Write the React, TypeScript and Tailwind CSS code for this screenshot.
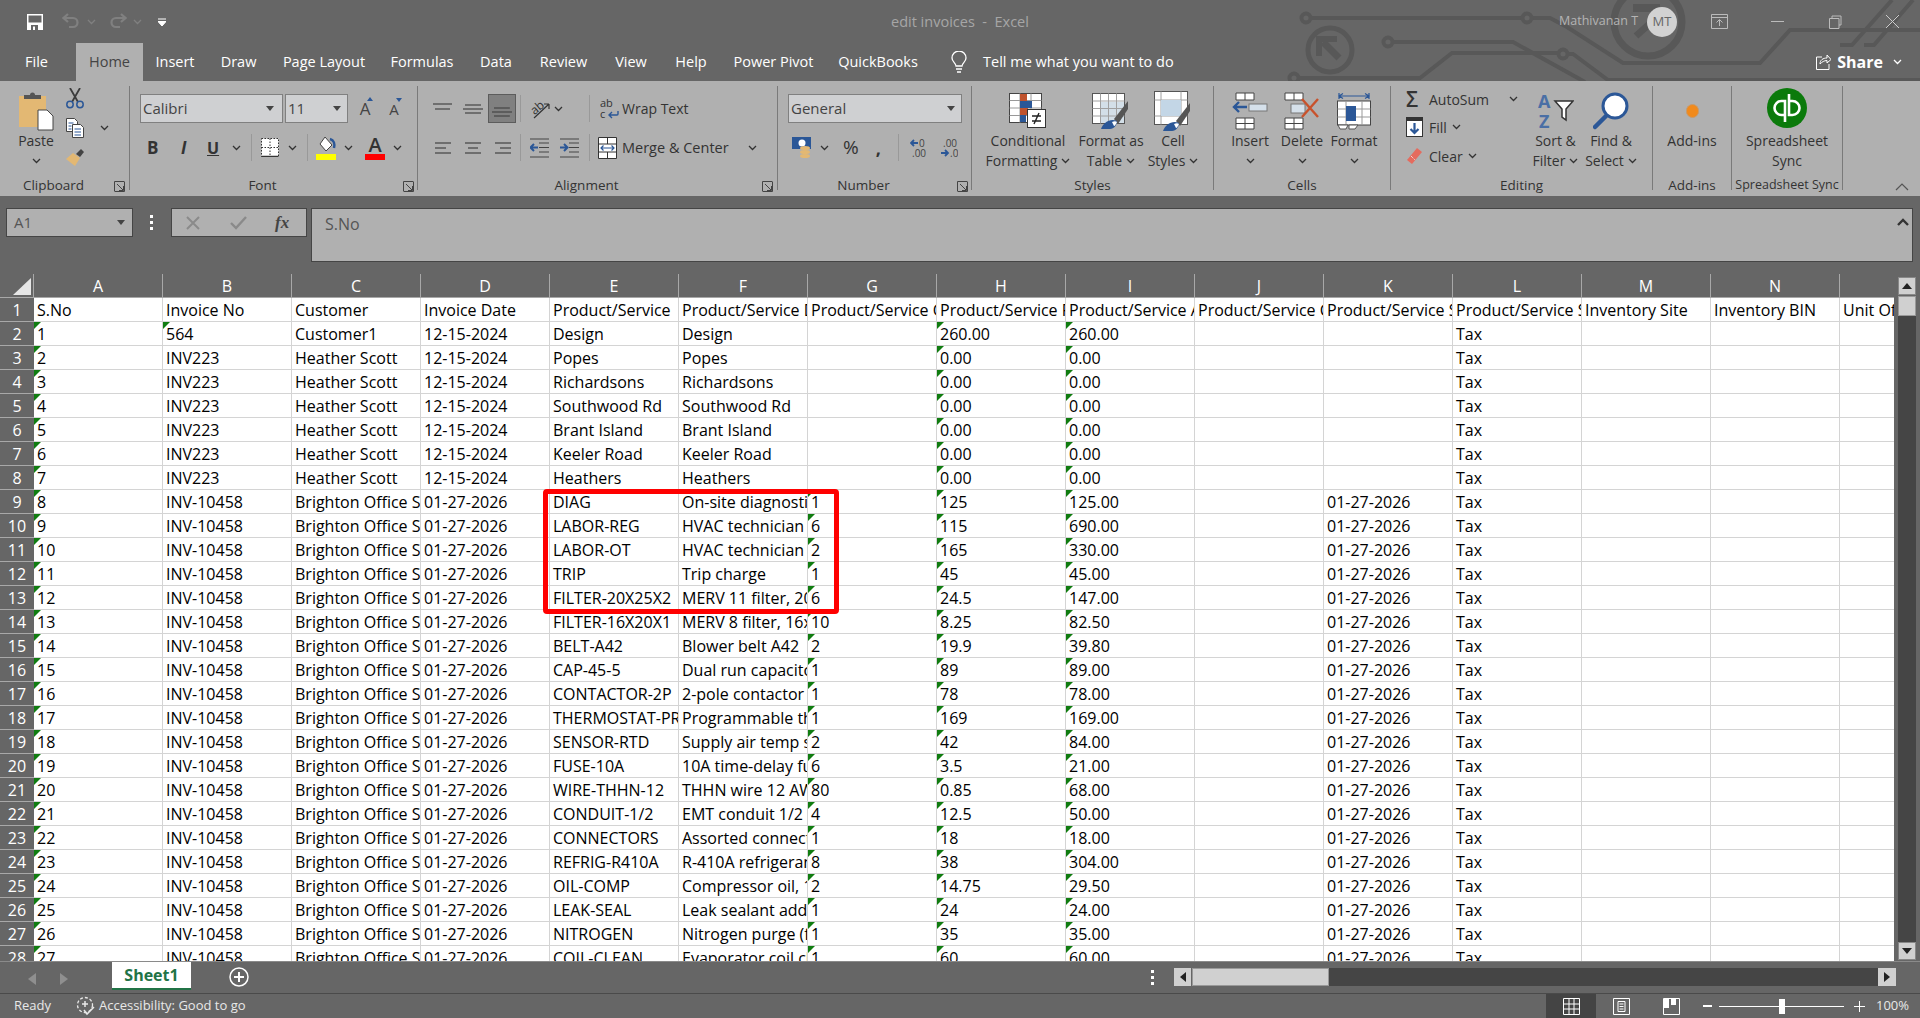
import React from "react";

const INK = "#333333";

function Chev({ className = "", color = INK }: { className?: string; color?: string }) {
  return (
    <svg width="9" height="6" viewBox="0 0 9 6" className={`shrink-0 ${className}`}>
      <path d="M1 1l3.5 3.5L8 1" fill="none" stroke={color} strokeWidth="1.3" />
    </svg>
  );
}

function Caret({ className = "" }: { className?: string }) {
  return (
    <svg width="8" height="5" viewBox="0 0 8 5" className={`shrink-0 ${className}`}>
      <path d="M0 0h8L4 5z" fill="#444" />
    </svg>
  );
}

function Launcher({ className = "" }: { className?: string }) {
  return (
    <svg width="11" height="11" viewBox="0 0 11 11" className={`absolute ${className}`}>
      <path d="M.5 10V.5H10M3 3l6 6M9.5 5v4.5H5M10.5 .5v10H.5" fill="none" stroke="#444" strokeWidth="1" />
    </svg>
  );
}

function Sep() {
  return <div className="w-px h-[104px] bg-[#7a7a7a] shrink-0" />;
}

function VLine({ className = "" }: { className?: string }) {
  return <div className={`w-px h-[27px] bg-[#999999] shrink-0 ${className}`} />;
}

function Group({
  w,
  label,
  pad,
  small,
  children,
}: {
  w: string;
  label: string;
  pad?: boolean;
  small?: boolean;
  children: React.ReactNode;
}) {
  return (
    <div className={`relative shrink-0 ${w}`}>
      <div className="h-[89px]">{children}</div>
      <div
        className={`h-[20px] leading-[20px] text-center text-[#333] whitespace-nowrap ${small ? "text-[12.5px]" : "text-[13.5px]"} ${
          pad ? "pr-[22px]" : ""
        }`}
      >
        {label}
      </div>
    </div>
  );
}

function Big({
  w,
  icon,
  lines,
  chevLast,
  plain,
}: {
  w: string;
  icon: React.ReactNode;
  lines: string[];
  chevLast?: boolean;
  plain?: boolean;
}) {
  return (
    <div className={`flex flex-col items-center shrink-0 pt-[4px] ${w}`}>
      <div className="h-[41px] flex items-center justify-center">{icon}</div>
      {lines.map((l, i) => (
        <div key={l} className="h-[20px] leading-[20px] text-[14px] text-[#333] whitespace-nowrap flex items-center">
          {l}
          {chevLast && i === lines.length - 1 ? <Chev className="ml-[4px]" /> : null}
        </div>
      ))}
      {!chevLast && !plain ? (
        <div className="h-[20px] flex items-center">
          <Chev />
        </div>
      ) : null}
    </div>
  );
}

function AlignLines({ ys, xs, className = "" }: { ys: number[]; xs: [number, number][]; className?: string }) {
  return (
    <svg width="20" height="20" viewBox="0 0 20 20" className={`shrink-0 ${className}`}>
      {ys.map((y, i) => (
        <path key={y} d={`M${xs[i][0]} ${y}H${xs[i][1]}`} stroke="#444" strokeWidth="1.2" />
      ))}
    </svg>
  );
}

function SaveIcon() {
  return (
    <svg width="16" height="16" viewBox="0 0 16 16" className="ml-[27px]">
      <path d="M0 0h16v16H0z" fill="#fff" />
      <path d="M1.5 1.5h13v7h-13z" fill="#666" />
      <path d="M4 11h7v5H4z" fill="#666" />
      <path d="M6 12.5h2V16H6z" fill="#fff" />
    </svg>
  );
}

function UndoIcon({ flip, className = "" }: { flip?: boolean; className?: string }) {
  return (
    <svg width="18" height="17" viewBox="0 0 18 17" className={className} style={flip ? { transform: "scaleX(-1)" } : undefined}>
      <path d="M2 5h9a4.5 4.5 0 010 9H7" fill="none" stroke="#808080" strokeWidth="2.2" />
      <path d="M6 1L1.5 5 6 9" fill="none" stroke="#808080" strokeWidth="2.2" />
    </svg>
  );
}

function PasteIcon() {
  return (
    <svg width="36" height="40" viewBox="0 0 36 40">
      <rect x="1" y="5" width="27" height="31" fill="#e3b873" />
      <path d="M6 8V4h6a2.5 2.5 0 015 0h6v4z" fill="#555" />
      <path d="M20 19h9l6 6v14H20z" fill="#fff" stroke="#444" strokeWidth="1" />
    </svg>
  );
}

function CutIcon() {
  return (
    <svg width="18" height="21" viewBox="0 0 18 21">
      <path d="M4 0l8 14M14 0L6 14" stroke="#3c3c3c" strokeWidth="1.8" fill="none" />
      <circle cx="4" cy="16.5" r="3.2" fill="none" stroke="#2b5797" strokeWidth="1.5" />
      <circle cx="14" cy="16.5" r="3.2" fill="none" stroke="#2b5797" strokeWidth="1.5" />
    </svg>
  );
}

function CopyIcon() {
  return (
    <svg width="18" height="20" viewBox="0 0 18 20">
      <path d="M.5.5h8l3 3v10H.5z" fill="#fff" stroke="#444" />
      <path d="M6.5 6.5h8l3 3v10h-11z" fill="#fff" stroke="#444" />
      <path d="M2.5 5h5M2.5 8h3M2.5 11h3M8.5 11H15M8.5 14H15M8.5 17H15" stroke="#2b5797" strokeWidth="1.2" />
    </svg>
  );
}

function PainterIcon() {
  return (
    <svg width="18" height="18" viewBox="0 0 18 18">
      <path d="M7 4l7 5-5 8-9-7z" fill="#e3b873" />
      <path d="M10 5l4-4 1-1 3 3-4 5z" fill="#444" />
    </svg>
  );
}

function BorderIcon() {
  return (
    <svg width="18" height="19" viewBox="0 0 18 19" className="shrink-0">
      <path d="M.5.5h17v18H.5zM9 .5v18M.5 9.5h17" fill="#fff" stroke="#333" strokeDasharray="1.5 1.5" />
      <path d="M.5 18.5h17" stroke="#333" strokeWidth="1.5" />
    </svg>
  );
}

function FillIcon() {
  return (
    <svg width="21" height="24" viewBox="0 0 21 24" className="shrink-0">
      <path d="M9 1l7 8-6 6-6-7z" fill="#fff" stroke="#444" />
      <path d="M14 3c4 1 5 5 4 9" fill="none" stroke="#2b5797" strokeWidth="2.5" />
      <rect x="0" y="18" width="20" height="6" fill="#ffff00" />
    </svg>
  );
}

function FontColorIcon() {
  return (
    <div className="flex flex-col items-center w-[20px] shrink-0">
      <span className="text-[20px] leading-[18px] font-semibold text-[#333]">A</span>
      <div className="h-[6px] w-[20px] bg-[#ff0000]" />
    </div>
  );
}

function Orientation() {
  return (
    <svg width="20" height="20" viewBox="0 0 20 20" className="shrink-0">
      <text x="0" y="12" fontSize="12" fill="#333" transform="rotate(-40 8 8)" fontFamily="Open Sans">ab</text>
      <path d="M4 19L19 5M19 5v5M19 5h-5" stroke="#333" strokeWidth="1.2" fill="none" />
    </svg>
  );
}

function IndentIcon({ dir, className = "" }: { dir: "l" | "r"; className?: string }) {
  return (
    <svg width="19" height="20" viewBox="0 0 19 20" className={`shrink-0 ${className}`}>
      <path d="M0 1h19M9 5h10M9 9.5h10M9 14h10M0 19h19" stroke="#444" strokeWidth="1.2" />
      {dir === "l" ? (
        <path d="M8 9.5H1M4 6L.5 9.5 4 13" stroke="#2b5797" strokeWidth="2" fill="none" />
      ) : (
        <path d="M0 9.5h7M4 6l3.5 3.5L4 13" stroke="#2b5797" strokeWidth="2" fill="none" />
      )}
    </svg>
  );
}

function WrapIcon() {
  return (
    <svg width="19" height="21" viewBox="0 0 19 21" className="shrink-0">
      <text x="0" y="9" fontSize="11" fill="#333" fontFamily="Open Sans">ab</text>
      <text x="0" y="20" fontSize="11" fill="#333" fontFamily="Open Sans">c</text>
      <path d="M18 13v3a1 1 0 01-1 1H9M12 14l-3 3 3 3" fill="none" stroke="#2b5797" strokeWidth="1.4" />
    </svg>
  );
}

function MergeIcon() {
  return (
    <svg width="19" height="22" viewBox="0 0 19 22" className="shrink-0">
      <path d="M.5.5h18v21H.5zM.5 7h18M.5 15h18M9.5.5V7M9.5 15v6.5" fill="#fff" stroke="#333" />
      <path d="M3 11h13M5.5 8.5L3 11l2.5 2.5M13.5 8.5L16 11l-2.5 2.5" stroke="#2b5797" fill="none" strokeWidth="1.2" />
    </svg>
  );
}

function CurrencyIcon() {
  return (
    <svg width="20" height="24" viewBox="0 0 20 24" className="shrink-0">
      <rect x="0" y="1" width="19" height="12" fill="#2b5797" />
      <circle cx="10" cy="7" r="3.5" fill="#fff" />
      <ellipse cx="13" cy="12" rx="5" ry="2" fill="#e3b873" />
      <ellipse cx="13" cy="16" rx="5" ry="2" fill="#e3b873" />
      <ellipse cx="13" cy="20" rx="5" ry="2" fill="#e3b873" />
    </svg>
  );
}

function DecimalIcon({ inc, className = "" }: { inc?: boolean; className?: string }) {
  return (
    <svg width="18" height="20" viewBox="0 0 18 20" className={`shrink-0 ${className}`}>
      {inc ? (
        <>
          <path d="M8 5H1M4 2L1 5l3 3" stroke="#2b5797" strokeWidth="1.8" fill="none" />
          <text x="9" y="9" fontSize="10" fill="#444" fontFamily="Open Sans">0</text>
          <text x="2" y="19" fontSize="10" fill="#444" fontFamily="Open Sans">.00</text>
        </>
      ) : (
        <>
          <text x="3" y="9" fontSize="10" fill="#444" fontFamily="Open Sans">.00</text>
          <path d="M1 15h7M5 12l3 3-3 3" stroke="#2b5797" strokeWidth="1.8" fill="none" />
          <text x="10" y="19" fontSize="10" fill="#444" fontFamily="Open Sans">.0</text>
        </>
      )}
    </svg>
  );
}

function CondIcon() {
  return (
    <svg width="38" height="36" viewBox="0 0 38 36">
      <rect x=".5" y=".5" width="32" height="29" fill="#fff" stroke="#444" />
      <path d="M.5 7.5h32M.5 15h32M.5 22.5h32M11 .5v29M22 .5v29" stroke="#999" />
      <rect x="11" y="1" width="7" height="7" fill="#c0532e" />
      <rect x="11" y="8" width="12" height="7" fill="#2b5797" />
      <rect x="11" y="15" width="8" height="7" fill="#c0532e" />
      <rect x="11" y="22" width="6" height="7" fill="#2b5797" />
      <rect x="18.5" y="16.5" width="18" height="18" fill="#fff" stroke="#333" />
      <path d="M23 23h9M23 28h9M30 20l-5 11" stroke="#222" strokeWidth="1.4" />
    </svg>
  );
}

function BrushTail() {
  return (
    <>
      <path d="M22 26l14-18v8L26 31z" fill="#555" />
      <path d="M9 36c2-6 9-11 16-8 0 4-3 8-7 8z" fill="#2b5797" />
      <path d="M20 29c2-1 4-1 5 0-1 2-2 4-3 4z" fill="#fff" />
    </>
  );
}

function TableStyleIcon() {
  return (
    <svg width="38" height="36" viewBox="0 0 38 36">
      <rect x=".5" y=".5" width="32" height="30" fill="#fff" stroke="#555" />
      <rect x="9" y="9" width="23" height="21" fill="#d3dfe8" />
      <path d="M.5 8h32M.5 15.5h32M.5 23h32M8.5.5v30M16.5.5v30M24.5.5v30" stroke="#a0a0a0" />
      <BrushTail />
    </svg>
  );
}

function CellStyleIcon() {
  return (
    <svg width="38" height="40" viewBox="0 0 38 40">
      <rect x=".5" y=".5" width="33" height="33" fill="#fff" stroke="#555" />
      <path d="M.5 9h33M.5 25h33M7 .5v33M27 .5v33" stroke="#a0a0a0" />
      <rect x="7" y="9" width="20" height="16" fill="#c3d6e6" />
      <g transform="translate(0 4)">
        <BrushTail />
      </g>
    </svg>
  );
}

function InsertCellsIcon() {
  return (
    <svg width="36" height="38" viewBox="0 0 36 38">
      <path d="M4 1h18v7H4zM13 1v7M4 26h18v11H4zM4 31.5h18M13 26v11" fill="#fff" stroke="#444" />
      <path d="M15 15H2M7 10l-5 5 5 5" stroke="#2b5797" strokeWidth="2.4" fill="none" />
      <rect x="17" y="12" width="18" height="7" fill="#d5e0ea" stroke="#777" />
    </svg>
  );
}

function DeleteCellsIcon() {
  return (
    <svg width="36" height="38" viewBox="0 0 36 38">
      <path d="M1 1h18v7H1zM10 1v7M1 26h18v11H1zM1 31.5h18M10 26v11" fill="#fff" stroke="#444" />
      <rect x="7" y="12" width="14" height="9" fill="#d5e0ea" stroke="#777" />
      <path d="M18 7l16 18M34 7L18 25" stroke="#c8522c" strokeWidth="2.4" />
    </svg>
  );
}

function FormatCellsIcon() {
  return (
    <svg width="34" height="38" viewBox="0 0 34 38">
      <path d="M2 4h30M2 1v6M32 1v6M6 1.5L2 4l4 2.5M28 1.5L32 4l-4 2.5" stroke="#2b5797" strokeWidth="1.2" fill="none" />
      <rect x=".5" y="9" width="33" height="24" fill="#fff" stroke="#444" />
      <path d="M9 9v24M25 9v24M.5 17h33M.5 25h33" stroke="#999" />
      <rect x="9" y="14" width="10" height="15" fill="#2b5797" />
      <path d="M1 33h10l-2 4H3zM12 33h9l-3 4h-6z" fill="#fff" stroke="#555" />
    </svg>
  );
}

function FillDownIcon() {
  return (
    <svg width="17" height="20" viewBox="0 0 17 20" className="shrink-0">
      <rect x=".5" y=".5" width="16" height="19" fill="#fff" stroke="#333" />
      <rect x="0" y="0" width="17" height="4" fill="#333" />
      <path d="M8.5 6v10M4.5 12l4 4 4-4" stroke="#2b5797" strokeWidth="2.2" fill="none" />
    </svg>
  );
}

function EraserIcon() {
  return (
    <svg width="17" height="18" viewBox="0 0 17 18" className="shrink-0">
      <path d="M11 1l5 4L6 17 1 13z" fill="#e56b5e" />
      <path d="M5 9l4 4" stroke="#fff" strokeDasharray="1 1" />
    </svg>
  );
}

function SortIcon() {
  return (
    <svg width="36" height="38" viewBox="0 0 36 38">
      <text x="0" y="16" fontSize="18" fontWeight="700" fill="#4a6fa5" fontFamily="Open Sans">A</text>
      <text x="1" y="36" fontSize="18" fontWeight="700" fill="#4a6fa5" fontFamily="Open Sans">Z</text>
      <path d="M17 9h18l-7 8v11l-4-3v-8z" fill="#fff" stroke="#333" strokeWidth="1.5" />
    </svg>
  );
}

function FindIcon() {
  return (
    <svg width="36" height="38" viewBox="0 0 36 38">
      <circle cx="22" cy="14" r="12" fill="#fff" stroke="#2b5797" strokeWidth="3" />
      <path d="M13 24L2 35" stroke="#2b5797" strokeWidth="4.5" strokeLinecap="round" />
    </svg>
  );
}

function QbLogo() {
  return (
    <svg width="40" height="40" viewBox="0 0 40 40" className="-mt-[5px]">
      <circle cx="20" cy="20" r="20" fill="#0b7a0b" />
      <path d="M18 27h-3.5a7 7 0 010-14H18v21M22 6v21h3.5a7 7 0 000-14H22" fill="none" stroke="#fff" strokeWidth="2.6" />
    </svg>
  );
}

function Circuit() {
  return (
    <svg width="640" height="81" viewBox="0 0 640 81" className="absolute right-0 top-0">
      <g fill="none" stroke="#585858" strokeWidth="4">
        <circle cx="26" cy="18" r="4.5" />
        <path d="M30 18h213M252 18h18l17 9 56 36h137l30-33h130" />
        <circle cx="247" cy="18" r="4.5" />
        <circle cx="50" cy="50" r="22" strokeWidth="5" />
        <path d="M59 58L43 42" strokeWidth="7" />
        <path d="M39 56V39h18" strokeWidth="6" />
        <circle cx="108" cy="42" r="4.5" />
        <path d="M113 42h120l72 40" />
        <circle cx="283" cy="54" r="4.5" />
        <circle cx="14" cy="78" r="4.5" />
        <path d="M19 78h121l32-25h106M288 54h5l35 26h312" />
        <circle cx="368" cy="22" r="34" strokeWidth="7" />
        <path d="M353 8h27" strokeWidth="8" />
        <path d="M356 36l20-18" strokeWidth="7" />
        <path d="M560 45h12L612 0M584 45h10L633 0" />
      </g>
    </svg>
  );
}

const TABS: [string, string][] = [
  ["File", "w-[76px] pr-[3px]"],
  ["Home", "w-[67px]"],
  ["Insert", "w-[64px]"],
  ["Draw", "w-[63px]"],
  ["Page Layout", "w-[108px]"],
  ["Formulas", "w-[88px]"],
  ["Data", "w-[60px]"],
  ["Review", "w-[75px]"],
  ["View", "w-[60px]"],
  ["Help", "w-[60px]"],
  ["Power Pivot", "w-[105px]"],
  ["QuickBooks", "w-[104px]"],
];

function TitleArea() {
  return (
    <div className="relative h-[81px] bg-[#666666] overflow-hidden">
      <Circuit />
      <div className="relative flex items-center h-[43px]">
        <SaveIcon />
        <UndoIcon className="ml-[19px]" />
        <Chev color="#808080" className="ml-[7px]" />
        <UndoIcon flip className="ml-[13px]" />
        <Chev color="#808080" className="ml-[6px]" />
        <svg width="8" height="8" viewBox="0 0 8 8" className="ml-[16px]">
          <path d="M0 1h8M0 3.5h8L4 8z" stroke="#fff" fill="#fff" />
        </svg>
        <div className="ml-[725px] w-[150px] text-[14.5px] text-[#a6a6a6] whitespace-pre">edit invoices  -  Excel</div>
        <div className="ml-[518px] text-[12.5px] text-[#b4b4b4] whitespace-nowrap w-[88px]">Mathivanan T</div>
        <div className="w-[30px] h-[30px] rounded-full bg-[#d2d2d2] text-[#666] text-[13px] flex items-center justify-center">MT</div>
        <svg width="17" height="15" viewBox="0 0 17 15" className="ml-[34px]">
          <path d="M.5.5h16v14H.5zM.5 3.5h16M8.5 12V6M5.5 8.5l3-3 3 3" fill="none" stroke="#bbb" />
        </svg>
        <div className="ml-[43px] w-[13px] h-px bg-[#bbb]" />
        <svg width="13" height="14" viewBox="0 0 13 14" className="ml-[45px]">
          <path d="M3 3V1h9v9h-2M.5 3.5H10v10H.5z" fill="none" stroke="#bbb" />
        </svg>
        <svg width="13" height="13" viewBox="0 0 13 13" className="ml-[44px]">
          <path d="M0 0l13 13M13 0L0 13" stroke="#ccc" />
        </svg>
      </div>
      <div className="relative flex h-[38px] items-stretch">
        {TABS.map(([t, w]) => (
          <div
            key={t}
            className={`${w} shrink-0 flex items-center justify-center text-[14.5px] whitespace-nowrap ${
              t === "Home" ? "bg-[#b0b0b0] text-[#444]" : "text-white"
            }`}
          >
            {t}
          </div>
        ))}
        <svg width="16" height="22" viewBox="0 0 16 22" className="self-center ml-[21px] shrink-0">
          <path d="M5 15c0-3-4-4-4-8a7 7 0 0114 0c0 4-4 5-4 8z" fill="none" stroke="#fff" strokeWidth="1.3" />
          <path d="M5 18h6M6 21h4" stroke="#fff" strokeWidth="1.3" />
        </svg>
        <div className="ml-[16px] self-center text-[14.5px] text-white whitespace-nowrap">Tell me what you want to do</div>
        <div className="ml-auto pr-[18px] self-center flex items-center">
          <svg width="15" height="16" viewBox="0 0 15 16">
            <path d="M6 3H.5v12.5H13V10M4 10c0-4 3-6 7-6V1l4 4.5L11 9V6.5C8 6.5 6 8 4 10z" fill="none" stroke="#fff" />
          </svg>
          <span className="ml-[6px] text-[16px] font-bold text-white">Share</span>
          <Chev color="#fff" className="ml-[10px]" />
        </div>
      </div>
    </div>
  );
}

function Ribbon() {
  return (
    <div className="flex items-start h-[115px] bg-[#b0b0b0] pt-[5px] text-[#333] overflow-hidden">
      <Group w="w-[129px]" label="Clipboard" pad>
        <div className="flex">
          <Big w="w-[72px]" icon={<PasteIcon />} lines={["Paste"]} />
          <div className="flex flex-col -ml-[6px] pt-[2px]">
            <CutIcon />
            <div className="flex items-center mt-[9px]">
              <CopyIcon />
              <Chev className="ml-[16px]" />
            </div>
            <div className="mt-[11px]">
              <PainterIcon />
            </div>
          </div>
        </div>
        <Launcher className="left-[114px] top-[95px]" />
      </Group>
      <Sep />

      <Group w="w-[287px]" label="Font" pad>
        <div className="flex items-center pl-[10px] pt-[8px]">
          <div className="w-[143px] h-[29px] bg-[#cfd0d2] border border-[#808080] flex items-center pl-[2px] text-[15px] text-[#444]">
            Calibri
            <Caret className="ml-auto mr-[8px]" />
          </div>
          <div className="ml-[2px] w-[63px] h-[29px] bg-[#cfd0d2] border border-[#808080] flex items-center pl-[2px] text-[15px] text-[#444]">
            11
            <Caret className="ml-auto mr-[6px]" />
          </div>
          <div className="ml-[9px] text-[17px] text-[#444] w-[16px] text-center leading-[20px] relative">
            A
            <div className="absolute -top-[2px] right-[0px] w-0 h-0 border-x-[3px] border-x-transparent border-b-[4px] border-b-[#2b5797]" />
          </div>
          <div className="ml-[13px] text-[15px] text-[#444] w-[16px] text-center leading-[20px] relative">
            A
            <div className="absolute -top-[1px] right-[0px] w-0 h-0 border-x-[3px] border-x-transparent border-t-[4px] border-t-[#2b5797]" />
          </div>
        </div>
        <div className="flex items-center pl-[17px] mt-[11px] h-[27px]">
          <span className="w-[13px] text-[17px] font-bold leading-none">B</span>
          <span className="ml-[21px] w-[13px] text-[17px] font-bold italic leading-none">I</span>
          <span className="ml-[13px] w-[14px] text-[16px] font-bold leading-none underline">U</span>
          <Chev className="ml-[11px]" />
          <VLine className="ml-[10px]" />
          <div className="ml-[9px]">
            <BorderIcon />
          </div>
          <Chev className="ml-[9px]" />
          <VLine className="ml-[10px]" />
          <div className="ml-[8px]">
            <FillIcon />
          </div>
          <Chev className="ml-[7px]" />
          <div className="ml-[12px]">
            <FontColorIcon />
          </div>
          <Chev className="ml-[8px]" />
        </div>
        <Launcher className="left-[273px] top-[95px]" />
      </Group>
      <Sep />

      <Group w="w-[359px]" label="Alignment" pad>
        <div className="flex items-center pl-[15px] pt-[8px] h-[37px]">
          <AlignLines ys={[5, 10]} xs={[[0, 19], [2, 17]]} />
          <AlignLines className="ml-[10px]" ys={[6, 10, 14]} xs={[[2, 18], [0, 20], [2, 18]]} />
          <div className="ml-[5px] w-[28px] h-[29px] bg-[#808080] border border-[#5c5c5c] flex items-center justify-center">
            <AlignLines ys={[9, 13, 17]} xs={[[2, 18], [0, 20], [2, 18]]} />
          </div>
          <VLine className="ml-[4px]" />
          <div className="ml-[9px]">
            <Orientation />
          </div>
          <Chev className="ml-[4px]" />
          <VLine className="ml-[26px]" />
          <div className="ml-[10px]">
            <WrapIcon />
          </div>
          <span className="ml-[3px] text-[14px] whitespace-nowrap">Wrap Text</span>
        </div>
        <div className="flex items-center pl-[17px] mt-[11px] h-[27px]">
          <AlignLines ys={[5, 10, 15]} xs={[[0, 16], [0, 11], [0, 16]]} />
          <AlignLines className="ml-[9px]" ys={[5, 10, 15]} xs={[[1, 17], [4, 14], [1, 17]]} />
          <AlignLines className="ml-[9px]" ys={[5, 10, 15]} xs={[[2, 18], [7, 18], [2, 18]]} />
          <VLine className="ml-[7px]" />
          <IndentIcon dir="l" className="ml-[9px]" />
          <IndentIcon dir="r" className="ml-[11px]" />
          <VLine className="ml-[10px]" />
          <div className="ml-[8px]">
            <MergeIcon />
          </div>
          <span className="ml-[5px] w-[106px] text-[14.5px] whitespace-nowrap">Merge &amp; Center</span>
          <Chev className="ml-[20px]" />
        </div>
        <Launcher className="left-[344px] top-[95px]" />
      </Group>
      <Sep />

      <Group w="w-[193px]" label="Number" pad>
        <div className="flex items-center pl-[10px] pt-[8px]">
          <div className="w-[174px] h-[29px] bg-[#cfd0d2] border border-[#808080] flex items-center pl-[2px] text-[15px] text-[#444]">
            General
            <Caret className="ml-auto mr-[6px]" />
          </div>
        </div>
        <div className="flex items-center pl-[14px] mt-[11px] h-[27px]">
          <CurrencyIcon />
          <Chev className="ml-[8px]" />
          <span className="ml-[14px] text-[19px] leading-none">%</span>
          <span className="ml-[17px] w-[8px] text-[18px] font-bold leading-none">,</span>
          <VLine className="ml-[14px]" />
          <DecimalIcon inc className="ml-[11px]" />
          <DecimalIcon className="ml-[12px]" />
        </div>
        <Launcher className="left-[179px] top-[95px]" />
      </Group>
      <Sep />

      <Group w="w-[241px]" label="Styles">
        <div className="flex pl-[4px]">
          <Big w="w-[104px]" icon={<CondIcon />} lines={["Conditional", "Formatting"]} chevLast />
          <Big w="w-[62px]" icon={<TableStyleIcon />} lines={["Format as", "Table"]} chevLast />
          <Big w="w-[62px]" icon={<CellStyleIcon />} lines={["Cell", "Styles"]} chevLast />
        </div>
      </Group>
      <Sep />

      <Group w="w-[176px]" label="Cells">
        <div className="flex pl-[10px]">
          <Big w="w-[52px]" icon={<InsertCellsIcon />} lines={["Insert"]} />
          <Big w="w-[52px]" icon={<DeleteCellsIcon />} lines={["Delete"]} />
          <Big w="w-[52px]" icon={<FormatCellsIcon />} lines={["Format"]} />
        </div>
      </Group>
      <Sep />

      <Group w="w-[261px]" label="Editing">
        <div className="flex">
          <div className="w-[136px] shrink-0 pl-[15px] text-[14px]">
            <div className="flex items-center h-[26px]">
              <span className="w-[23px] text-[21px] leading-none font-semibold">Σ</span>
              <span>AutoSum</span>
              <Chev className="ml-[20px]" />
            </div>
            <div className="flex items-center h-[26px] mt-[2px]">
              <div className="w-[23px]">
                <FillDownIcon />
              </div>
              <span>Fill</span>
              <Chev className="ml-[5px]" />
            </div>
            <div className="flex items-center h-[26px] mt-[3px]">
              <div className="w-[23px]">
                <EraserIcon />
              </div>
              <span>Clear</span>
              <Chev className="ml-[5px]" />
            </div>
          </div>
          <Big w="w-[57px]" icon={<SortIcon />} lines={["Sort &", "Filter"]} chevLast />
          <Big w="w-[54px]" icon={<FindIcon />} lines={["Find &", "Select"]} chevLast />
        </div>
      </Group>
      <Sep />

      <Group w="w-[78px]" label="Add-ins">
        <Big
          w="w-[78px]"
          icon={<div className="w-[13px] h-[14px] rounded-full bg-[#f18a1c] border border-[#c99a6a]" />}
          lines={["Add-ins"]}
          plain
        />
      </Group>
      <Sep />

      <Group w="w-[110px]" label="Spreadsheet Sync" small>
        <Big w="w-[110px]" icon={<QbLogo />} lines={["Spreadsheet", "Sync"]} plain />
      </Group>
      <Sep />

      <svg width="14" height="8" viewBox="0 0 14 8" className="ml-[52px] mt-[97px] shrink-0">
        <path d="M1 7l6-6 6 6" fill="none" stroke="#555" strokeWidth="1.2" />
      </svg>
    </div>
  );
}

function FormulaBar() {
  return (
    <div className="flex items-start h-[78px] bg-[#666666] pt-[12px] pl-[6px] pr-[7px]">
      <div className="w-[127px] h-[29px] bg-[#b0b0b0] border border-[#454545] flex items-center pl-[7px] text-[15px] text-[#555] shrink-0">
        A1
        <Caret className="ml-auto mr-[7px]" />
      </div>
      <div className="ml-[17px] h-[29px] flex flex-col justify-center gap-[3px] w-[3px] shrink-0">
        <div className="w-[3px] h-[3px] bg-white" />
        <div className="w-[3px] h-[3px] bg-white" />
        <div className="w-[3px] h-[3px] bg-white" />
      </div>
      <div className="ml-[18px] w-[136px] h-[29px] bg-[#b0b0b0] border border-[#454545] flex items-center shrink-0">
        <svg width="14" height="14" viewBox="0 0 14 14" className="ml-[14px]">
          <path d="M1 1l12 12M13 1L1 13" stroke="#8a8a8a" strokeWidth="2" />
        </svg>
        <svg width="17" height="14" viewBox="0 0 17 14" className="ml-[30px]">
          <path d="M1 7l5 5L16 1" stroke="#8a8a8a" strokeWidth="2.4" fill="none" />
        </svg>
        <span className="ml-[28px] text-[17px] italic font-bold [font-family:'Liberation_Serif',serif] text-[#444]">fx</span>
      </div>
      <div className="ml-[4px] flex-1 h-[54px] bg-[#b0b0b0] border border-[#454545] flex items-start pl-[13px] pt-[3px] text-[16px] text-[#555]">
        S.No
        <svg width="12" height="8" viewBox="0 0 12 8" className="ml-auto mr-[3px] mt-[6px]">
          <path d="M1 7l5-5 5 5" fill="none" stroke="#333" strokeWidth="2.4" />
        </svg>
      </div>
    </div>
  );
}

const COLS = "ABCDEFGHIJKLMNO".split("");
const HEAD = [
  "S.No", "Invoice No", "Customer", "Invoice Date", "Product/Service", "Product/Service Description",
  "Product/Service Quantity", "Product/Service Rate", "Product/Service Amount", "Product/Service Class",
  "Product/Service Service Date", "Product/Service Sales Tax", "Inventory Site", "Inventory BIN", "Unit Of Measure",
];
const ITEMS: [string, string, string, string, string][] = [
  ["Design", "Design", "", "260.00", "260.00"],
  ["Popes", "Popes", "", "0.00", "0.00"],
  ["Richardsons", "Richardsons", "", "0.00", "0.00"],
  ["Southwood Rd", "Southwood Rd", "", "0.00", "0.00"],
  ["Brant Island", "Brant Island", "", "0.00", "0.00"],
  ["Keeler Road", "Keeler Road", "", "0.00", "0.00"],
  ["Heathers", "Heathers", "", "0.00", "0.00"],
  ["DIAG", "On-site diagnostic fee", "1", "125", "125.00"],
  ["LABOR-REG", "HVAC technician labor", "6", "115", "690.00"],
  ["LABOR-OT", "HVAC technician overtime", "2", "165", "330.00"],
  ["TRIP", "Trip charge", "1", "45", "45.00"],
  ["FILTER-20X25X2", "MERV 11 filter, 20x25x2", "6", "24.5", "147.00"],
  ["FILTER-16X20X1", "MERV 8 filter, 16x20x1", "10", "8.25", "82.50"],
  ["BELT-A42", "Blower belt A42", "2", "19.9", "39.80"],
  ["CAP-45-5", "Dual run capacitor 45/5", "1", "89", "89.00"],
  ["CONTACTOR-2P", "2-pole contactor", "1", "78", "78.00"],
  ["THERMOSTAT-PRG", "Programmable thermostat", "1", "169", "169.00"],
  ["SENSOR-RTD", "Supply air temp sensor", "2", "42", "84.00"],
  ["FUSE-10A", "10A time-delay fuse", "6", "3.5", "21.00"],
  ["WIRE-THHN-12", "THHN wire 12 AWG", "80", "0.85", "68.00"],
  ["CONDUIT-1/2", "EMT conduit 1/2 in", "4", "12.5", "50.00"],
  ["CONNECTORS", "Assorted connectors", "1", "18", "18.00"],
  ["REFRIG-R410A", "R-410A refrigerant", "8", "38", "304.00"],
  ["OIL-COMP", "Compressor oil, 1 qt", "2", "14.75", "29.50"],
  ["LEAK-SEAL", "Leak sealant additive", "1", "24", "24.00"],
  ["NITROGEN", "Nitrogen purge (fill)", "1", "35", "35.00"],
  ["COIL-CLEAN", "Evaporator coil cleaner", "1", "60", "60.00"],
];

function Cell({ text, mark }: { text: string; mark?: boolean }) {
  return (
    <div className="relative w-[129px] h-full shrink-0 overflow-hidden whitespace-nowrap border-r border-b border-[#d4d4d4] pl-[3px] leading-[24px]">
      {mark ? <div className="absolute left-0 top-0 w-0 h-0 border-t-[7px] border-t-[#107c10] border-r-[7px] border-r-transparent" /> : null}
      {text}
    </div>
  );
}

function Sheet() {
  const rows = ITEMS.map((it, i) => {
    const num = i + 1;
    const late = i >= 7;
    return [
      String(num),
      i === 0 ? "564" : late ? "INV-10458" : "INV223",
      i === 0 ? "Customer1" : late ? "Brighton Office Services" : "Heather Scott",
      late ? "01-27-2026" : "12-15-2024",
      it[0],
      it[1],
      it[2],
      it[3],
      it[4],
      "",
      late ? "01-27-2026" : "",
      "Tax",
      "",
      "",
      "",
    ];
  });
  return (
    <div className="relative w-[1894px] shrink-0 bg-white overflow-hidden text-[16px] text-black">
      <div className="flex h-[24px] bg-[#666666] border-b border-[#a8a8a8]">
        <div className="w-[34px] shrink-0 border-r border-[#a8a8a8] flex items-end justify-end pr-[2px] pb-[2px]">
          <svg width="18" height="17" viewBox="0 0 18 17">
            <path d="M18 0v17H0z" fill="#e6e6e6" />
          </svg>
        </div>
        {COLS.map((c) => (
          <div key={c} className="w-[129px] shrink-0 border-r border-[#a8a8a8] text-center text-white leading-[24px]">
            {c}
          </div>
        ))}
      </div>
      <div className="flex h-[24px]">
        <div className="w-[34px] shrink-0 bg-[#666666] border-b border-[#a8a8a8] text-white text-center leading-[24px]">1</div>
        {HEAD.map((h) => (
          <Cell key={h} text={h} />
        ))}
      </div>
      {rows.map((r, i) => (
        <div key={i} className="flex h-[24px]">
          <div className="w-[34px] shrink-0 bg-[#666666] border-b border-[#a8a8a8] text-white text-center leading-[24px]">{i + 2}</div>
          {r.map((t, j) => (
            <Cell
              key={j}
              text={t}
              mark={j === 0 || (j === 1 && i === 0) || (j === 6 && i >= 7) || j === 7 || j === 8}
            />
          ))}
        </div>
      ))}
      <div className="absolute left-[543px] top-[215px] w-[296px] h-[125px] border-[5px] border-[#ff0000] rounded-[4px]" />
    </div>
  );
}

function VScroll() {
  return (
    <div className="flex-1 bg-[#666666] flex flex-col pl-[4px] pr-[4px] pt-[3px] pb-[1px]">
      <div className="h-[18px] bg-[#d0d0d0] border border-[#888] flex items-center justify-center">
        <svg width="10" height="6" viewBox="0 0 10 6">
          <path d="M5 0l5 6H0z" fill="#222" />
        </svg>
      </div>
      <div className="h-[20px] mt-px bg-[#d0d0d0] border border-[#999]" />
      <div className="flex-1 bg-[#454545]" />
      <div className="h-[18px] bg-[#d0d0d0] border border-[#888] flex items-center justify-center">
        <svg width="10" height="6" viewBox="0 0 10 6">
          <path d="M5 6l5-6H0z" fill="#222" />
        </svg>
      </div>
    </div>
  );
}

function SheetTabs() {
  return (
    <div className="flex items-start h-[32px] bg-[#666666] border-t border-[#8a8a8a] text-white">
      <svg width="8" height="12" viewBox="0 0 8 12" className="ml-[28px] mt-[11px]">
        <path d="M8 0v12L0 6z" fill="#8f8f8f" />
      </svg>
      <svg width="8" height="12" viewBox="0 0 8 12" className="ml-[24px] mt-[11px]">
        <path d="M0 0v12l8-6z" fill="#8f8f8f" />
      </svg>
      <div className="ml-[44px] w-[79px] h-[28px] bg-white border-b-[2px] border-[#217346] text-[#217346] font-bold text-[16px] flex items-center justify-center">
        Sheet1
      </div>
      <svg width="20" height="20" viewBox="0 0 20 20" className="ml-[38px] mt-[5px]">
        <circle cx="10" cy="10" r="9" fill="none" stroke="#fff" strokeWidth="1.5" />
        <path d="M10 5v10M5 10h10" stroke="#fff" strokeWidth="2" />
      </svg>
      <div className="ml-[902px] h-[30px] flex flex-col justify-center gap-[3px]">
        <div className="w-[3px] h-[3px] bg-white" />
        <div className="w-[3px] h-[3px] bg-white" />
        <div className="w-[3px] h-[3px] bg-white" />
      </div>
      <div className="ml-[20px] mt-[6px] flex h-[18px]">
        <div className="w-[17px] bg-[#d0d0d0] flex items-center justify-center">
          <svg width="6" height="10" viewBox="0 0 6 10">
            <path d="M6 0v10L0 5z" fill="#222" />
          </svg>
        </div>
        <div className="ml-[1px] w-[137px] bg-[#d0d0d0] border border-[#999]" />
        <div className="w-[549px] bg-[#454545]" />
        <div className="w-[18px] bg-[#d0d0d0] flex items-center justify-center">
          <svg width="6" height="10" viewBox="0 0 6 10">
            <path d="M0 0v10l6-5z" fill="#222" />
          </svg>
        </div>
      </div>
    </div>
  );
}

function StatusBar() {
  return (
    <div className="flex items-center h-[25px] bg-[#666666] border-t border-[#4a4a4a] text-[13px] text-[#e8e8e8]">
      <span className="ml-[14px] w-[62px]">Ready</span>
      <svg width="20" height="20" viewBox="0 0 20 20">
        <circle cx="9" cy="9" r="7.5" fill="none" stroke="#e8e8e8" strokeWidth="1.3" strokeDasharray="3 2" />
        <path d="M9 5v6M6 8h6M8 14l3 4 7-7" fill="none" stroke="#e8e8e8" strokeWidth="1.5" />
      </svg>
      <span className="ml-[3px] whitespace-nowrap">Accessibility: Good to go</span>
      <div className="ml-auto flex items-stretch h-full">
        <div className="w-[50px] bg-[#444444] flex items-center justify-center">
          <svg width="17" height="17" viewBox="0 0 17 17">
            <path d="M.5.5h16v16H.5zM6 .5v16M11 .5v16M.5 6h16M.5 11h16" fill="none" stroke="#fff" />
          </svg>
        </div>
        <div className="w-[50px] flex items-center justify-center">
          <svg width="17" height="17" viewBox="0 0 17 17">
            <path d="M.5.5h16v16H.5zM5 3.5h7v10H5zM6.5 6h4M6.5 8.5h4M6.5 11h4" fill="none" stroke="#fff" />
          </svg>
        </div>
        <div className="w-[50px] flex items-center justify-center">
          <svg width="17" height="17" viewBox="0 0 17 17">
            <path d="M.5.5h16v16H.5z" fill="none" stroke="#fff" />
            <path d="M1 1h5v9H1zM8 1h5v6H8z" fill="#fff" />
          </svg>
        </div>
        <div className="flex items-center ml-[7px] mr-[12px]">
          <div className="w-[9px] h-[2px] bg-white" />
          <div className="relative ml-[7px] w-[125px] h-px bg-white">
            <div className="absolute left-[60px] -top-[7px] w-[6px] h-[15px] bg-white" />
          </div>
          <div className="relative ml-[10px] w-[11px] h-[11px]">
            <div className="absolute left-0 top-[5px] w-[11px] h-px bg-white" />
            <div className="absolute left-[5px] top-0 w-px h-[11px] bg-white" />
          </div>
          <span className="ml-[11px] w-[32px] text-[13px]">100%</span>
        </div>
      </div>
    </div>
  );
}

export default function App() {
  return (
    <div className="w-[1920px] h-[1018px] overflow-hidden bg-[#666666] [font-family:'Open_Sans',sans-serif]">
      <TitleArea />
      <Ribbon />
      <FormulaBar />
      <div className="flex h-[687px]">
        <Sheet />
        <VScroll />
      </div>
      <SheetTabs />
      <StatusBar />
    </div>
  );
}
